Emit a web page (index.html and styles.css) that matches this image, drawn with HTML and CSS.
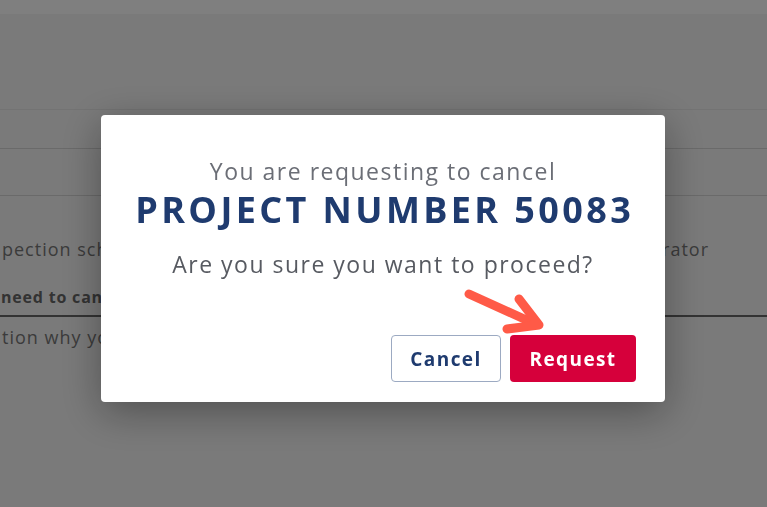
FILE: index.html
```html
<!DOCTYPE html>
<html lang="en">
<head>
<meta charset="utf-8">
<title>Cancel project</title>
<link rel="stylesheet" href="styles.css">
</head>
<body>
<div class="page">
  <div class="topbar"></div>
  <div class="header-space"></div>
  <div class="row row-a"></div>
  <div class="row row-b"></div>
  <div class="row row-c">
    <span class="left-text">pection schedule</span>
    <span class="right-text">Administrator</span>
  </div>
  <div class="row row-d">
    <span class="bold-text">need to cancel</span>
  </div>
  <div class="row row-e">
    <span class="left-text">tion why you</span>
  </div>
</div>
<div class="overlay"></div>
<div class="modal" role="dialog">
  <p class="lead">You are requesting to cancel</p>
  <h1 class="project">PROJECT NUMBER 50083</h1>
  <p class="question">Are you sure you want to proceed?</p>
  <div class="actions">
    <button class="btn btn-cancel">Cancel</button>
    <button class="btn btn-request">Request</button>
  </div>
  <svg class="arrow" width="90" height="50" viewBox="0 0 90 50">
    <path d="M8 7 L72 36" stroke="#ff5a47" stroke-width="9" stroke-linecap="round" fill="none"/>
    <path d="M58 12 L78 38 L46 42" stroke="#ff5a47" stroke-width="9" stroke-linecap="round" stroke-linejoin="round" fill="none"/>
  </svg>
</div>
</body>
</html>
```

FILE: styles.css
```css
html, body {
  margin: 0;
  padding: 0;
}
body {
  background: #f5f5f5;
  font-family: "Open Sans", "Noto Sans", sans-serif;
  width: 767px;
  height: 507px;
  overflow: hidden;
}
.page {
  display: flex;
  flex-direction: column;
}
.topbar {
  height: 14px;
  background: #ffffff;
}
.header-space {
  height: 95px;
  border-bottom: 1px solid #e6e6e6;
}
.row {
  border-bottom: 1px solid #d4d4d4;
  display: flex;
  justify-content: space-between;
  align-items: center;
}
.row-a { height: 38px; }
.row-b { height: 46px; }
.row-c {
  border-bottom: none;
  align-items: flex-start;
  padding-top: 41px;
  box-sizing: border-box;
  height: 76px;
}
.row-d {
  height: 45px;
  border-bottom: 2px solid #666;
  align-items: flex-end;
  padding-bottom: 7px;
  box-sizing: border-box;
}
.row-e {
  border-bottom: none;
  padding-top: 8px;
}
.left-text, .right-text {
  font-size: 18px;
  color: #777;
  letter-spacing: 1px;
  margin-left: 2px;
}
.right-text {
  margin-left: 0;
  margin-right: 58px;
}
.bold-text {
  font-size: 16px;
  font-weight: 700;
  color: #666;
  letter-spacing: 0.8px;
  margin-left: 1px;
}
.overlay {
  position: fixed;
  inset: 0;
  background: rgba(0, 0, 0, 0.5);
}
.modal {
  position: fixed;
  left: 101px;
  top: 115px;
  width: 564px;
  height: 287px;
  box-sizing: border-box;
  background: #fff;
  border-radius: 4px;
  box-shadow: 0 10px 40px rgba(0, 0, 0, 0.35);
  padding: 41px 29px 20px;
  text-align: center;
  display: flex;
  flex-direction: column;
  color: #5f636b;
}
.lead {
  margin: 0;
  font-size: 23px;
  line-height: 30px;
  letter-spacing: 1.5px;
  color: #6b6e76;
}
.project {
  margin: 4px -20px 0;
  font-size: 36px;
  line-height: 40px;
  font-weight: 700;
  color: #1f3b6f;
  letter-spacing: 3.4px;
  padding-left: 3.4px;
  white-space: nowrap;
}
.question {
  margin: 19px 0 0;
  font-size: 23px;
  line-height: 30px;
  letter-spacing: 1.5px;
  color: #575a61;
}
.actions {
  margin-top: auto;
  display: flex;
  justify-content: flex-end;
  gap: 9px;
}
.btn {
  height: 47px;
  border-radius: 4px;
  font-family: inherit;
  font-size: 19px;
  font-weight: 700;
  letter-spacing: 1.4px;
  box-sizing: border-box;
  padding: 0;
}
.btn-cancel {
  width: 110px;
  background: #fff;
  border: 1px solid #9caac2;
  color: #1f3b6f;
}
.btn-request {
  width: 126px;
  background: #d6003b;
  border: none;
  color: #fff;
}
.arrow {
  position: absolute;
  left: 360px;
  top: 172px;
}
```
